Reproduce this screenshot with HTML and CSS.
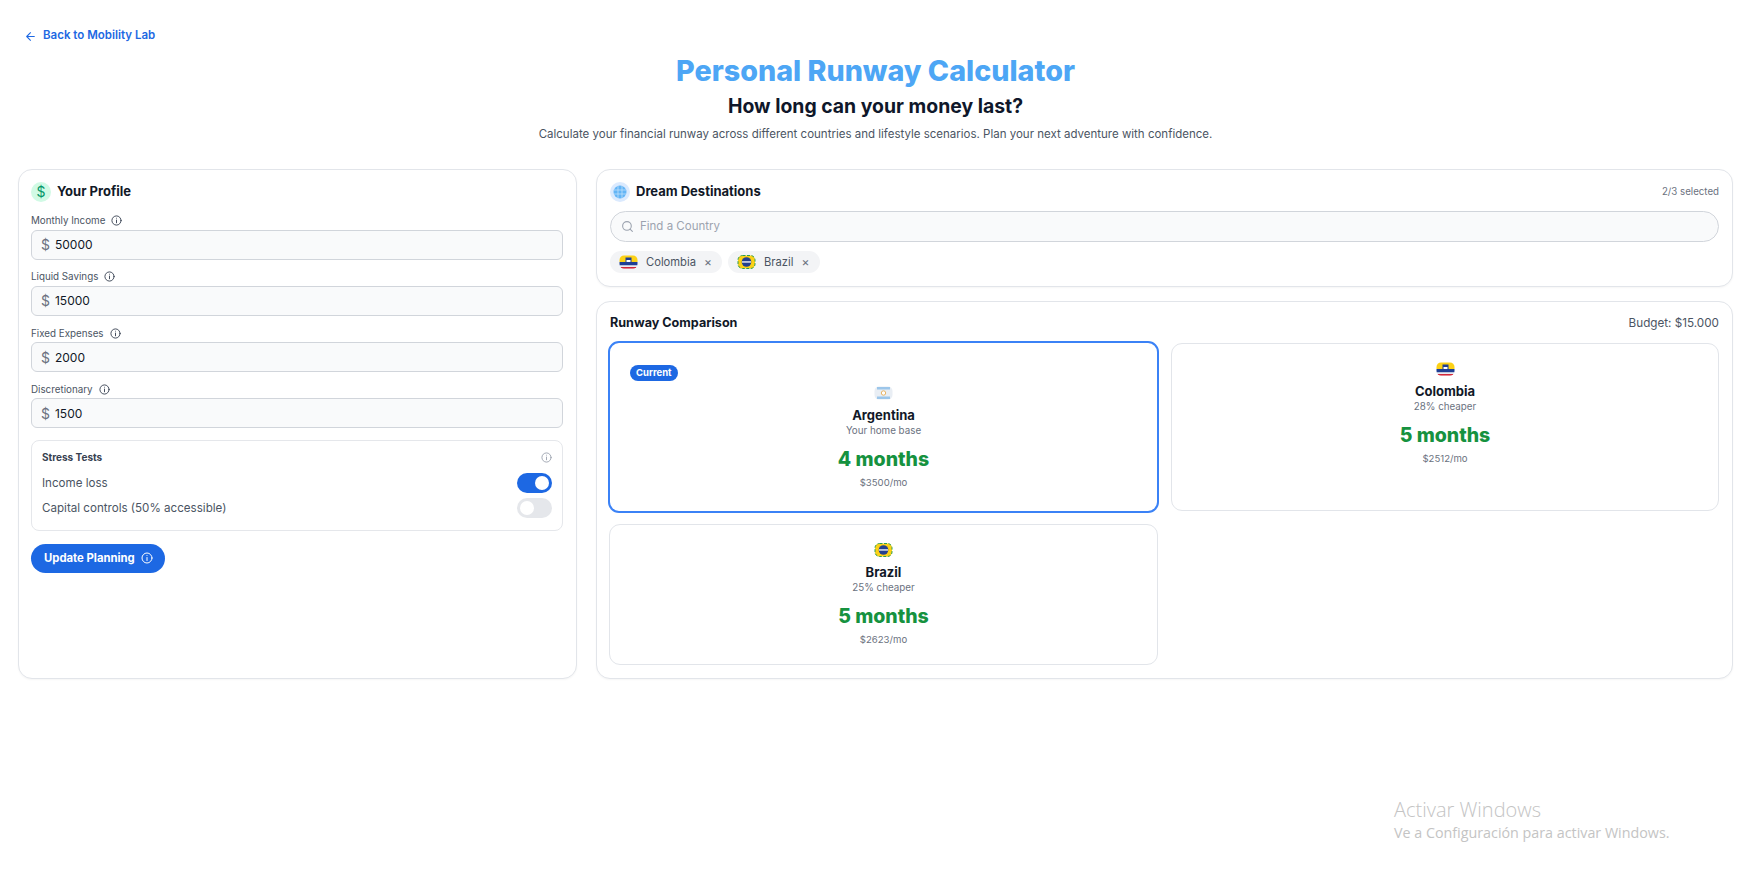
FILE: index.html
```html
<!DOCTYPE html>
<html lang="en">
<head>
	<meta charset="UTF-8">
	<title>Personal Runway Calculator</title>
	<link rel="stylesheet" href="styles.css">
</head>
<body>
	<svg class="defs" width="0" height="0">
		<symbol id="info" viewBox="0 0 24 24"><circle cx="12" cy="12" r="10"/><path d="M12 17v-6M12 7h.01"/></symbol>
		<clipPath id="flag-round"><rect x="0.5" y="0.5" width="18" height="13" rx="4.5"/></clipPath>
		<symbol id="flag-co" viewBox="0 0 19 14">
			<g clip-path="url(#flag-round)">
				<rect width="19" height="7" fill="#fcd116"/>
				<rect y="7" width="19" height="3.5" fill="#1f3f94"/>
				<rect x="6.5" y="2.5" width="6" height="4.5" fill="#1f3f94"/>
				<rect x="7.5" y="5" width="4" height="2" fill="#fff"/>
				<rect y="10.5" width="19" height="1.6" fill="#e9eaf2"/>
				<rect y="12.1" width="19" height="2" fill="#ce1126"/>
			</g>
		</symbol>
		<symbol id="flag-br" viewBox="0 0 19 14">
			<rect x="1" y="0.5" width="17" height="13" rx="4.5" fill="#fcd116" stroke="#2e9e4f" stroke-dasharray="3 1.5"/>
			<circle cx="9.5" cy="7" r="4.8" fill="#24408e"/>
			<path d="M5 6.3h9v1.3H5z" fill="#fff"/>
		</symbol>
		<symbol id="flag-ar" viewBox="0 0 19 14">
			<rect x="0.5" y="0.5" width="18" height="13" rx="4.5" fill="#e9eef4"/>
			<path d="M3 1h13v2.5H3zM3 10.5h13V13H3z" fill="#9cc6ea"/>
			<circle cx="9.5" cy="7" r="2.2" fill="#fff" stroke="#e8b465"/>
		</symbol>
	</svg>

	<a href="#" class="back">
		<svg viewBox="0 0 24 24" class="back-arrow"><path d="M12 19l-7-7 7-7M19 12H5"/></svg>
		Back to Mobility Lab
	</a>

	<header class="head">
		<h1>Personal Runway Calculator</h1>
		<h2>How long can your money last?</h2>
		<p>Calculate your financial runway across different countries and lifestyle scenarios. Plan your next adventure with confidence.</p>
	</header>

	<main class="layout">
		<section class="card profile">
			<div class="card-title">
				<span class="round-icon green">$</span>
				<h3>Your Profile</h3>
			</div>

			<div class="field">
				<label>Monthly Income <svg class="info"><use href="#info"/></svg></label>
				<div class="money"><span>$</span><input type="text" value="50000"></div>
			</div>
			<div class="field">
				<label>Liquid Savings <svg class="info"><use href="#info"/></svg></label>
				<div class="money"><span>$</span><input type="text" value="15000"></div>
			</div>
			<div class="field">
				<label>Fixed Expenses <svg class="info"><use href="#info"/></svg></label>
				<div class="money"><span>$</span><input type="text" value="2000"></div>
			</div>
			<div class="field">
				<label>Discretionary <svg class="info"><use href="#info"/></svg></label>
				<div class="money"><span>$</span><input type="text" value="1500"></div>
			</div>

			<div class="stress">
				<div class="stress-head">
					<h4>Stress Tests</h4>
					<svg class="info light"><use href="#info"/></svg>
				</div>
				<div class="stress-row">
					<span>Income loss</span>
					<span class="toggle on"></span>
				</div>
				<div class="stress-row">
					<span>Capital controls (50% accessible)</span>
					<span class="toggle"></span>
				</div>
			</div>

			<button class="update">Update Planning <svg class="info white"><use href="#info"/></svg></button>
		</section>

		<div class="right">
			<section class="card dest">
				<div class="card-title spread">
					<div class="title-left">
						<span class="round-icon blue">
							<svg viewBox="0 0 14 14" class="globe"><circle cx="7" cy="7" r="6.5" fill="#63b5f6"/><path d="M1 5h12M1 9h12M5 1v12M9 1v12" stroke="#bfe0fb" stroke-width=".8"/></svg>
						</span>
						<h3>Dream Destinations</h3>
					</div>
					<span class="small-note">2/3 selected</span>
				</div>
				<div class="search">
					<svg viewBox="0 0 24 24" class="search-icon"><circle cx="11" cy="11" r="8"/><path d="M21 21l-4.3-4.3"/></svg>
					<input type="text" placeholder="Find a Country">
				</div>
				<div class="chips">
					<span class="chip chip-co"><svg class="flag"><use href="#flag-co"/></svg>Colombia<i>&times;</i></span>
					<span class="chip chip-br"><svg class="flag"><use href="#flag-br"/></svg>Brazil<i>&times;</i></span>
				</div>
			</section>

			<section class="card compare">
				<div class="compare-head">
					<h3>Runway Comparison</h3>
					<span>Budget: $15.000</span>
				</div>
				<div class="compare-grid">
					<div class="country current">
						<span class="badge">Current</span>
						<svg class="flag"><use href="#flag-ar"/></svg>
						<h4>Argentina</h4>
						<p class="sub">Your home base</p>
						<p class="months">4 months</p>
						<p class="cost">$3500/mo</p>
					</div>
					<div class="country">
						<svg class="flag"><use href="#flag-co"/></svg>
						<h4>Colombia</h4>
						<p class="sub">28% cheaper</p>
						<p class="months">5 months</p>
						<p class="cost">$2512/mo</p>
					</div>
					<div class="country">
						<svg class="flag"><use href="#flag-br"/></svg>
						<h4>Brazil</h4>
						<p class="sub">25% cheaper</p>
						<p class="months">5 months</p>
						<p class="cost">$2623/mo</p>
					</div>
				</div>
			</section>
		</div>
	</main>

	<div class="watermark">
		<strong>Activar Windows</strong>
		<span>Ve a Configuración para activar Windows.</span>
	</div>
</body>
</html>
```

FILE: styles.css
```css
* {
	box-sizing: border-box;
}
body,h1,h2,h3,h4,p {
	margin: 0;
	padding: 0;
}
body {
	height: 889px;
	padding: 26px 15px 0 18px;
	position: relative;
	overflow: hidden;
	background: #fff;
	color: #111827;
	font-family: Inter, "Liberation Sans", sans-serif;
}
a {
	text-decoration: none;
}
input {
	border: none;
	outline: none;
	background: transparent;
	font-family: inherit;
	min-width: 0;
	flex: 1;
	padding: 0;
}
.defs {
	position: absolute;
}
.back {
	display: inline-flex;
	align-items: center;
	gap: 6px;
	margin-left: 6px;
	height: 17px;
	font-size: 11.5px;
	font-weight: 600;
	color: #1d68e3;
}
.back-arrow {
	width: 13px;
	height: 13px;
	margin-top: 3px;
	fill: none;
	stroke: #1d68e3;
	stroke-width: 2;
	stroke-linecap: round;
	stroke-linejoin: round;
}
.head {
	text-align: center;
	margin-top: 5px;
	height: 82px;
}
.head h1 {
	font-size: 28.7px;
	line-height: 38px;
	font-weight: 800;
	color: #4da6f5;
}
.head h2 {
	font-size: 19.4px;
	line-height: 24px;
	margin-top: 4px;
	font-weight: 700;
	color: #0f172a;
}
.head p {
	font-size: 11.5px;
	line-height: 16px;
	margin-top: 8px;
	color: #4b5563;
}
.layout {
	display: grid;
	grid-template-columns: 559px 1137px;
	gap: 19px;
	margin-top: 35px;
	height: 510px;
}
.card {
	border: 1px solid #e2e5ea;
	border-radius: 14px;
	background: #fff;
	box-shadow: 0 1px 2px rgba(0,0,0,.04);
}
.profile {
	padding: 12px 13px 0 12px;
}
.card-title {
	display: flex;
	align-items: center;
	gap: 6px;
	height: 20px;
}
.profile .card-title {
	margin-bottom: 10px;
}
.card-title h3 {
	font-size: 13px;
	font-weight: 700;
	padding-bottom: 2px;
}
.compare-head h3 {
	font-size: 12.6px;
	font-weight: 700;
}
.round-icon {
	width: 20px;
	height: 20px;
	border-radius: 50%;
	display: flex;
	align-items: center;
	justify-content: center;
}
.green {
	background: #d1fae5;
	color: #059669;
	font-size: 14px;
}
.blue {
	background: #dbeafe;
}
.globe {
	width: 14px;
	height: 14px;
}
.field {
	height: 56.3px;
}
.field label {
	display: flex;
	align-items: center;
	gap: 6px;
	height: 18px;
	font-size: 9.8px;
	color: #4b5563;
}
.info {
	width: 11px;
	height: 11px;
	fill: none;
	stroke: #374151;
	stroke-width: 2;
	stroke-linecap: round;
}
.info.light {
	stroke: #9ca3af;
}
.info.white {
	width: 12px;
	height: 12px;
	flex: none;
	stroke: #fff;
}
.money {
	display: flex;
	align-items: center;
	gap: 5px;
	height: 30px;
	padding: 0 9px;
	background: #f9fafb;
	border: 1px solid #d1d5db;
	border-radius: 6px;
}
.money span {
	color: #6b7280;
	font-size: 14px;
}
.money input {
	font-size: 12px;
	color: #111827;
}
.stress {
	height: 91px;
	margin-top: 3px;
	padding: 10px 10px 0;
	border: 1px solid #e5e7eb;
	border-radius: 8px;
}
.stress-head {
	display: flex;
	justify-content: space-between;
	align-items: center;
	height: 13px;
	margin-bottom: 9px;
}
.stress-head h4 {
	font-size: 10px;
	font-weight: 700;
	color: #374151;
}
.stress-row {
	display: flex;
	justify-content: space-between;
	align-items: center;
	height: 20px;
	margin-bottom: 5px;
	font-size: 11.6px;
	color: #4b5563;
}
.toggle {
	width: 35px;
	height: 20px;
	border-radius: 10px;
	background: #e5e7eb;
	padding: 3px;
	display: flex;
}
.toggle:after {
	content: "";
	width: 14px;
	height: 14px;
	border-radius: 50%;
	background: #fff;
}
.toggle.on {
	background: #1d68e3;
	justify-content: flex-end;
}
.update {
	display: flex;
	align-items: center;
	gap: 6px;
	margin-top: 13px;
	height: 29px;
	width: 134px;
	padding: 0 13px;
	border: none;
	border-radius: 15px;
	background: #1d68e3;
	color: #fff;
	white-space: nowrap;
	font-family: inherit;
	font-size: 11.3px;
	font-weight: 700;
}
.right {
	display: flex;
	flex-direction: column;
	gap: 14px;
}
.dest {
	height: 118px;
	padding: 12px 13px 0;
}
.spread {
	justify-content: space-between;
}
.title-left {
	display: flex;
	align-items: center;
	gap: 6px;
}
.small-note {
	font-size: 9.7px;
	color: #6b7280;
}
.search {
	display: flex;
	align-items: center;
	gap: 6px;
	height: 31px;
	margin-top: 9px;
	padding: 0 10px;
	background: #f9fafb;
	border: 1px solid #d1d5db;
	border-radius: 16px;
}
.search-icon {
	width: 13px;
	height: 13px;
	flex: none;
	fill: none;
	stroke: #9ca3af;
	stroke-width: 2;
	stroke-linecap: round;
}
.search input {
	font-size: 11.5px;
}
.search input::placeholder {
	color: #9ca3af;
}
.chips {
	display: flex;
	gap: 6px;
	margin-top: 9px;
}
.chip {
	display: flex;
	align-items: center;
	height: 22px;
	padding: 0 9px;
	border-radius: 11px;
	background: #f3f4f6;
	font-size: 11.2px;
	color: #4b5563;
}
.chip i {
	font-style: normal;
	color: #6b7280;
	font-size: 12px;
	margin-left: 8px;
}
.chip .flag {
	margin: 0 8px 0 0;
}
.chip-co {
	width: 112px;
}
.chip-br {
	width: 92px;
}
.flag {
	width: 19px;
	height: 14px;
	flex: none;
	display: block;
}
.compare {
	flex: 1;
	padding: 13px 13px 0;
}
.compare-head {
	display: flex;
	justify-content: space-between;
	align-items: center;
	height: 16px;
	margin-bottom: 12px;
}
.compare-head span {
	font-size: 11.7px;
	color: #4b5563;
}
.compare-grid {
	display: grid;
	grid-template-columns: 549px 548px;
	grid-template-rows: 168px 141px;
	gap: 13px;
	margin-left: -1px;
}
.country {
	border: 1px solid #e2e5ea;
	border-radius: 11px;
	padding-top: 18px;
	display: flex;
	flex-direction: column;
	align-items: center;
	text-align: center;
}
.country.current {
	border: 2px solid #3b82f6;
	margin: -2px -1px;
	padding-top: 22px;
}
.badge {
	align-self: flex-start;
	margin: 0 0 5px 20px;
	height: 16px;
	padding: 0 6px;
	border-radius: 8px;
	background: #1d68e3;
	color: #fff;
	font-size: 9.5px;
	font-weight: 700;
	line-height: 15px;
}
.country h4 {
	font-size: 13px;
	line-height: 16px;
	margin-top: 7px;
	font-weight: 700;
}
.sub {
	font-size: 9.8px;
	line-height: 14px;
	margin-top: 1px;
	color: #6b7280;
}
.months {
	font-size: 19.5px;
	line-height: 26px;
	margin-top: 8px;
	font-weight: 800;
	color: #16923f;
}
.cost {
	font-size: 9.6px;
	line-height: 14px;
	margin-top: 4px;
	color: #6b7280;
}
.watermark {
	position: absolute;
	left: 1394px;
	top: 796px;
	display: flex;
	flex-direction: column;
	font-family: "Open Sans", sans-serif;
	color: #c4c4c4;
}
.watermark strong {
	font-weight: 300;
	font-size: 20px;
	line-height: 28px;
}
.watermark span {
	font-size: 14.3px;
	line-height: 17px;
}
```
